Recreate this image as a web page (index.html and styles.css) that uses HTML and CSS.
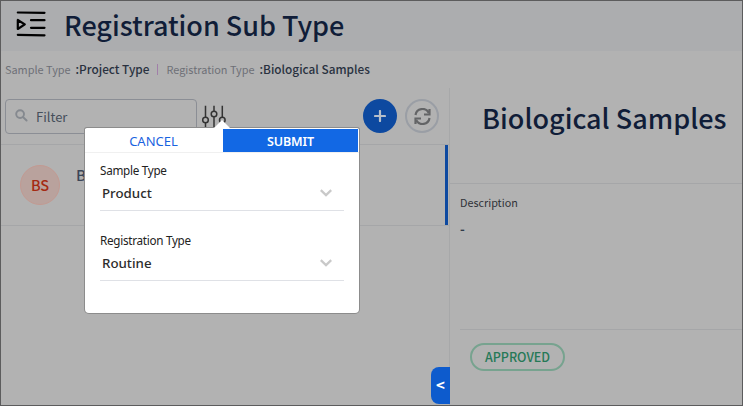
FILE: index.html
```html
<!DOCTYPE html>
<html lang="en">
<head>
<meta charset="utf-8">
<title>Registration Sub Type</title>
<link rel="stylesheet" href="styles.css">
</head>
<body>
<div class="app">
  <header class="header">
    <svg class="menu-icon" width="30" height="28" viewBox="0 0 30 28" fill="none" stroke="#000" stroke-width="2.200" stroke-linecap="round" stroke-linejoin="round">
      <path d="M1.800 2.500L28.500 2.800M15 10.200h13.500M15 17.800h13.500M1.800 24.800L28.500 25.300M1.800 10v9l7-4.600z"/>
    </svg>
    <h1 class="page-title">Registration Sub Type</h1>
  </header>
  <nav class="crumbs">
    <span class="crumb-label">Sample Type</span>
    <span class="crumb-value">:Project Type</span>
    <span class="crumb-sep"></span>
    <span class="crumb-label">Registration Type</span>
    <span class="crumb-value">:Biological Samples</span>
  </nav>
  <main class="body">
    <section class="list">
      <div class="toolbar">
        <div class="filter">
          <svg width="13" height="13" viewBox="0 0 13 13" fill="none" stroke="#85898f" stroke-width="1.900" stroke-linecap="round"><circle cx="5.100" cy="5.100" r="3.900"/><path d="M8.200 8.200l3.400 3.300"/></svg>
          <span class="filter-text">Filter</span>
        </div>
        <div class="tune">
          <svg width="24" height="26" viewBox="0 0 24 26" fill="none" stroke="#333" stroke-width="1.500"><path d="M3.500 .7v11.500M3.500 18v8M12 .7v5.500M12 12v14M20.300 .7v11.500M20.300 18v8"/><circle cx="3.500" cy="15" r="2.800"/><circle cx="12" cy="9" r="2.800"/><circle cx="20.300" cy="15" r="2.800"/></svg>
        </div>
        <div class="add"><svg width="12" height="12" viewBox="0 0 12 12" stroke="#b7bfca" stroke-width="2.200" stroke-linecap="round"><path d="M6 1v10M1 6h10"/></svg></div>
        <div class="refresh"><svg width="17" height="17" viewBox="0 0 17 17" fill="none" stroke="#636466" stroke-width="2.200"><path d="M1.500 7A7 7 0 0 1 14.600 4.700M15.500 1v5.500h-5.500M15.500 10A7 7 0 0 1 2.400 12.300M1.500 16v-5.500h5.500"/></svg></div>
      </div>
      <div class="row"><div class="avatar">BS</div><span class="row-name">B</span></div>
      <div class="toggle">&lt;</div>
    </section>
    <section class="detail">
      <h2 class="detail-title">Biological Samples</h2>
      <div class="detail-body">
        <span class="desc-label">Description</span>
        <span class="desc-value">-</span>
      </div>
      <div class="detail-foot"><span class="status">APPROVED</span></div>
    </section>
  </main>
  <div class="popup">
    <div class="actions"><button class="cancel">CANCEL</button><button class="submit">SUBMIT</button></div>
    <div class="field">
      <label>Sample Type</label>
      <div class="select"><span>Product</span><svg width="12" height="8" viewBox="0 0 12 8" fill="none" stroke="#c9c9c9" stroke-width="2.300"><path d="M.8 1.200L6 6.200l5.200-5"/></svg></div>
    </div>
    <div class="field second">
      <label>Registration Type</label>
      <div class="select"><span>Routine</span><svg width="12" height="8" viewBox="0 0 12 8" fill="none" stroke="#c9c9c9" stroke-width="2.300"><path d="M.8 1.200L6 6.200l5.200-5"/></svg></div>
    </div>
  </div>
</div>
</body>
</html>
```
FILE: styles.css
```css
* { box-sizing: border-box; }
body { margin: 0; font-family: "Noto Sans CJK SC", "Noto Sans", sans-serif; }
h1, h2 { margin: 0; }
span, h1, h2, label { white-space: nowrap; }
.app { position: relative; width: 743px; height: 406px; border: 1px solid #5c5c5d; background: #b2b2b2; display: flex; flex-direction: column; overflow: hidden; }
.header { height: 50px; flex: none; background: #acadaf; display: flex; padding-left: 15px; }
.menu-icon { margin-top: 9px; flex: none; }
.page-title { margin-left: 18px; color: #101d38; font-size: 27px; line-height: 48px; font-weight: 500; letter-spacing: -0.03px; }
.crumbs { height: 37px; flex: none; display: flex; align-items: center; padding: 0 0 2px 4px; font-size: 12px; line-height: 18px; }
.crumb-label { color: #6e7077; font-size: 10.900px; }
.crumb-value { color: #29313f; font-weight: 500; margin-left: 5px; font-size: 11.800px; }
.crumb-sep { width: 1px; height: 11px; background: #a17fa9; margin: 2px 8px 0; }
.body { flex: 1; display: flex; min-height: 0; }
.list { width: 449px; flex: none; border-right: 1px solid #a7a8a9; display: flex; flex-direction: column; }
.toolbar { height: 57px; flex: none; border-bottom: 1px solid #a5a6a8; display: flex; padding: 11px 10px 0 4px; }
.filter { width: 192px; height: 35px; border: 1px solid #8b8e95; border-radius: 4px; padding-left: 9px; display: flex; align-items: center; color: #454f5b; font-size: 13px; }
.filter svg { margin-top: -3px; }
.filter-text { margin-left: 8px; }
.tune { margin: 6px 0 0 5px; height: 26px; }
.add, .refresh { width: 34px; height: 34px; border-radius: 50%; display: flex; align-items: center; justify-content: center; }
.add { margin-left: auto; background: #0d49a0; }
.refresh { margin-left: 8px; border: 2px solid #9a9ea5; }
.row { height: 81px; flex: none; border-bottom: 1px solid #a5a6a8; display: flex; padding: 20px 4px 0 19px; position: relative; }
.row::after { content: ""; position: absolute; right: 1px; top: 0; width: 3px; height: 80px; background: #0d49a0; }
.avatar { width: 40px; height: 40px; border-radius: 50%; border: 1px solid #c29a92; background: #b9a29d; color: #a52a12; font-size: 14.500px; line-height: 38px; text-align: center; font-weight: 500; }
.row-name { margin-left: 16px; font-size: 15px; line-height: 20px; font-weight: 500; color: #3c4658; }
.toggle { align-self: flex-end; margin: auto -1px 1px 0; width: 19px; height: 37px; border-radius: 8px 0 0 8px; background: #0d5bcd; color: #fff; font-size: 15px; font-weight: 700; line-height: 35px; text-align: center; z-index: 1; }
.detail { flex: 1; display: flex; flex-direction: column; min-width: 0; }
.detail-title { height: 96px; flex: none; border-bottom: 1px solid #a5a6a8; padding-left: 32px; line-height: 60px; font-size: 27px; font-weight: 500; color: #101d38; }
.detail-body { height: 146px; margin-left: 10px; border-bottom: 1px solid #a5a6a8; display: flex; flex-direction: column; padding-top: 8px; }
.desc-label { font-size: 10.800px; line-height: 20px; color: #303338; }
.desc-value { font-size: 13px; line-height: 20px; margin-top: 7px; color: #303a48; font-weight: 700; }
.detail-foot { padding: 13px 0 0 20px; display: flex; }
.status { width: 95px; height: 28px; border: 2px solid #77a38f; border-radius: 14px; color: #267957; font-size: 12.500px; font-weight: 500; line-height: 24px; text-align: center; }
.popup { position: absolute; left: 84px; top: 127px; width: 274px; height: 185px; background: #fff; border-radius: 2px 2px 4px 4px; box-shadow: 0 0 0 1px #8c8c8c; display: flex; flex-direction: column; font-family: "Noto Sans", sans-serif; }
.popup::before { content: ""; position: absolute; left: 129px; top: -8px; width: 16px; height: 8px; background: #fff; clip-path: polygon(50% 0, 100% 100%, 0 100%); }
.actions { height: 25px; display: flex; border-bottom: 1px solid #f0f0f0; padding: 1px 1px 0 0; gap: 2px; }
.actions button { border: 0; padding: 2px 0 0; font: 13px/21px "Noto Sans", sans-serif; text-align: center; }
.actions .cancel { width: 136px; padding-left: 1px; background: #fff; color: #1a63df; }
.actions .submit { width: 135px; background: #1268e4; color: #fff; font-size: 12.500px; font-weight: 600; letter-spacing: -0.15px; }
.field { display: flex; flex-direction: column; margin: 0 15px; height: 58px; border-bottom: 1px solid #dfe1e6; }
.second { margin-top: 12px; }
.field label { font-size: 11.700px; line-height: 18px; margin-top: 8px; color: #222; letter-spacing: -0.28px; }
.select { display: flex; justify-content: space-between; padding: 0 12px 0 2px; align-items: center; height: 27px; color: #2c2c2c; font-size: 13.300px; font-weight: 500; }
```
